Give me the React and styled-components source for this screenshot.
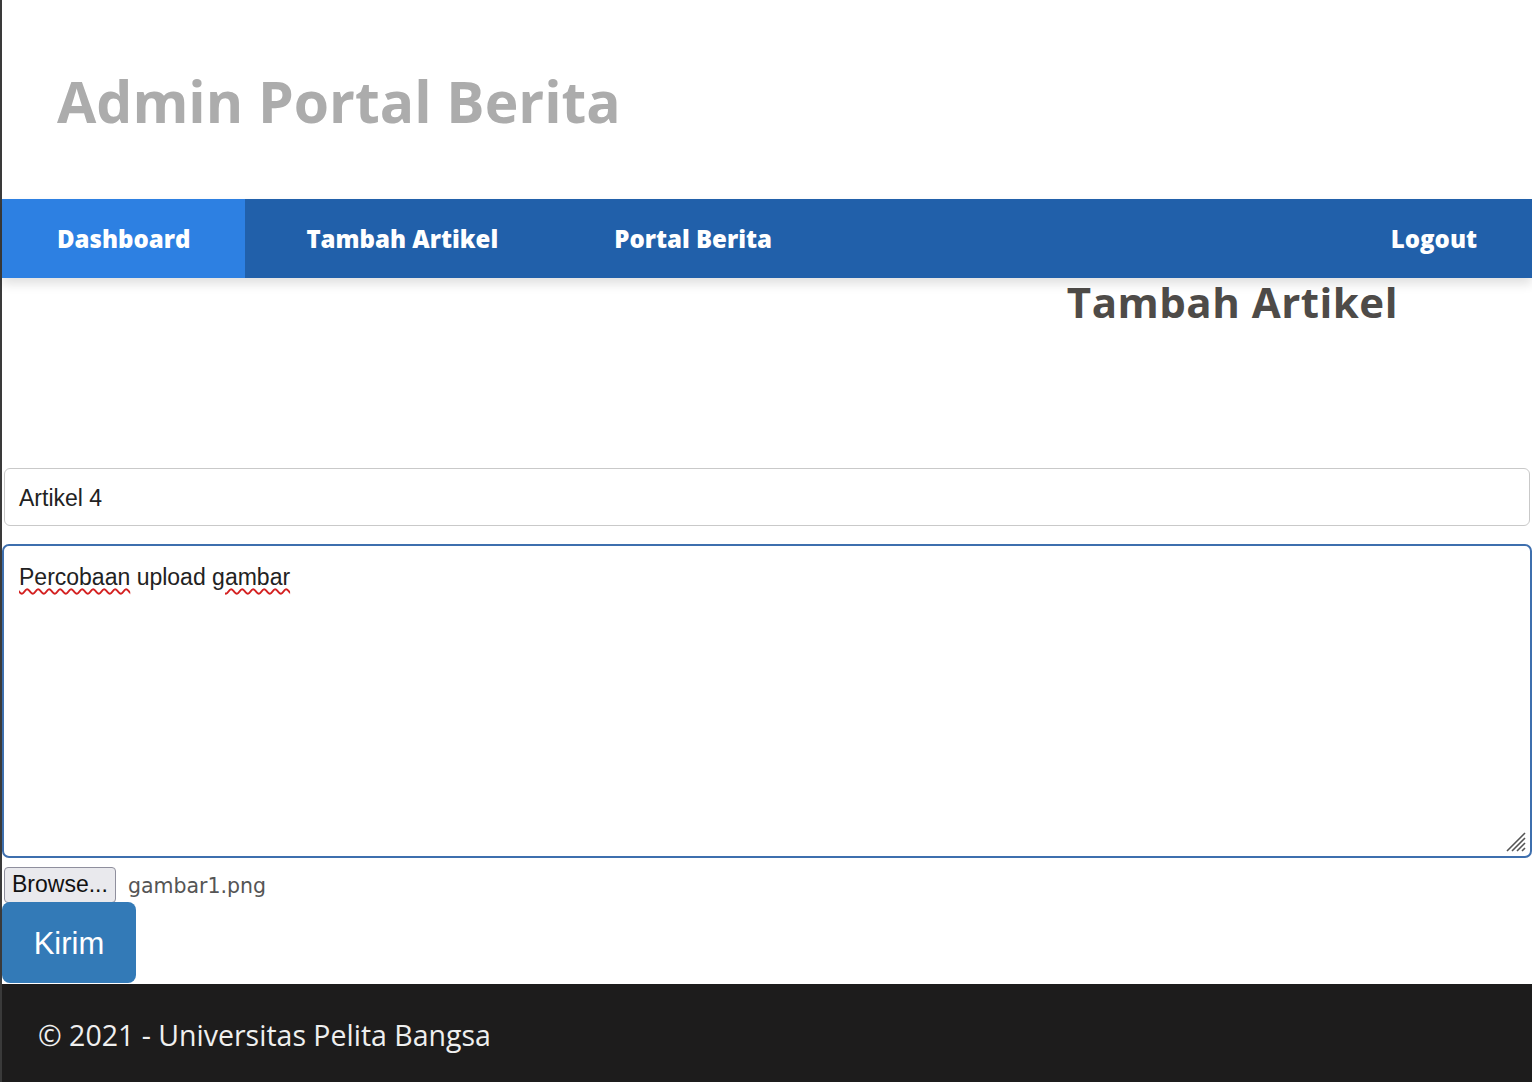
import React from "react";
import styled, { createGlobalStyle } from "styled-components";

const GlobalStyle = createGlobalStyle`
  html, body {
    margin: 0;
    padding: 0;
    background: #ffffff;
  }
  body {
    font-family: "Open Sans", "Liberation Sans", sans-serif;
  }
`;

const Page = styled.div`
  width: 1532px;
  min-height: 1082px;
  display: flex;
  flex-direction: column;
  border-left: 2px solid #3a3a3a;
  box-sizing: border-box;
`;

const Header = styled.header`
  height: 199px;
  display: flex;
  align-items: center;
  padding-left: 55px;
`;

const SiteTitle = styled.h1`
  margin: 2px 0 0 0;
  font-family: "Open Sans", sans-serif;
  font-weight: 700;
  font-size: 57px;
  color: #acacac;
`;

const Nav = styled.nav`
  height: 79px;
  background: #2160aa;
  display: flex;
  align-items: stretch;
  gap: 6px;
  box-shadow: 0 6px 10px rgba(0, 0, 0, 0.12);
  position: relative;
  z-index: 1;
`;

const NavItem = styled.a`
  display: flex;
  align-items: center;
  padding: 0 55px;
  color: #ffffff;
  font-family: "Open Sans", sans-serif;
  font-weight: 800;
  font-size: 24px;
  text-decoration: none;
  background: ${(p) => (p.$active ? "#2d80e2" : "transparent")};
  margin-left: ${(p) => (p.$right ? "auto" : "0")};
`;

const Main = styled.main`
  flex: 1;
  display: flex;
  flex-direction: column;
`;

const PageHeading = styled.h2`
  margin: 0;
  padding-right: 134px;
  text-align: right;
  font-family: "Open Sans", sans-serif;
  font-weight: 700;
  font-size: 42px;
  line-height: 48px;
  letter-spacing: 0.5px;
  color: #4e4b48;
`;

const Form = styled.form`
  margin-top: 142px;
  display: flex;
  flex-direction: column;
`;

const TextInput = styled.div`
  height: 58px;
  margin: 0 2px 18px 2px;
  border: 1px solid #c9c9c9;
  border-radius: 6px;
  box-sizing: border-box;
  display: flex;
  align-items: center;
  padding: 2px 0 0 14px;
  font-family: "Liberation Sans", Arial, sans-serif;
  font-size: 23px;
  color: #222;
`;

const TextAreaBox = styled.div`
  position: relative;
  height: 314px;
  border: 2px solid #3e6fae;
  border-radius: 7px;
  box-sizing: border-box;
  padding: 18px 15px;
  font-family: "Liberation Sans", Arial, sans-serif;
  font-size: 23px;
  color: #222;
`;

const Misspelled = styled.span`
  text-decoration: underline wavy #d42020;
  text-decoration-thickness: 1.5px;
  text-underline-offset: 3px;
`;

const Grip = styled.svg`
  position: absolute;
  right: 3px;
  bottom: 3px;
`;

const FileRow = styled.div`
  display: flex;
  align-items: center;
  gap: 12px;
  margin: 8px 0 0 2px;
  height: 37px;
`;

const BrowseButton = styled.button`
  height: 36px;
  padding: 0 7px;
  background: #e9e9ed;
  border: 1px solid #8f8f9d;
  border-radius: 4px;
  font-family: "Liberation Sans", Arial, sans-serif;
  font-size: 23px;
  color: #111;
`;

const FileName = styled.span`
  font-family: "DejaVu Sans", sans-serif;
  font-size: 20.5px;
  color: #555;
  padding-top: 2px;
`;

const SubmitButton = styled.button`
  align-self: flex-start;
  width: 134px;
  height: 81px;
  background: #337ab7;
  color: #ffffff;
  border: none;
  border-radius: 8px;
  font-family: "Liberation Sans", Arial, sans-serif;
  font-size: 31px;
  padding-top: 4px;
  margin-top: -1px;
`;

const Footer = styled.footer`
  height: 98px;
  background: #1d1c1c;
  display: flex;
  align-items: center;
  padding: 3px 0 0 36px;
  box-sizing: border-box;
  color: #efefef;
  font-family: "Open Sans", sans-serif;
  font-size: 28.5px;
`;

export default function App() {
  return (
    <>
      <GlobalStyle />
      <Page>
        <Header>
          <SiteTitle>Admin Portal Berita</SiteTitle>
        </Header>
        <Nav>
          <NavItem $active>Dashboard</NavItem>
          <NavItem>Tambah Artikel</NavItem>
          <NavItem>Portal Berita</NavItem>
          <NavItem $right>Logout</NavItem>
        </Nav>
        <Main>
          <PageHeading>Tambah Artikel</PageHeading>
          <Form onSubmit={(e) => e.preventDefault()}>
            <TextInput>Artikel 4</TextInput>
            <TextAreaBox>
              <Misspelled>Percobaan</Misspelled> upload <Misspelled>gambar</Misspelled>
              <Grip width="26" height="26" viewBox="0 0 26 26">
                <path
                  d="M24 6 L6 24 M24 11 L11 24 M24 16 L16 24 M24 21 L21 24"
                  stroke="#555"
                  strokeWidth="1.6"
                  fill="none"
                />
              </Grip>
            </TextAreaBox>
            <FileRow>
              <BrowseButton type="button">Browse...</BrowseButton>
              <FileName>gambar1.png</FileName>
            </FileRow>
            <SubmitButton type="submit">Kirim</SubmitButton>
          </Form>
        </Main>
        <Footer>© 2021 - Universitas Pelita Bangsa</Footer>
      </Page>
    </>
  );
}
